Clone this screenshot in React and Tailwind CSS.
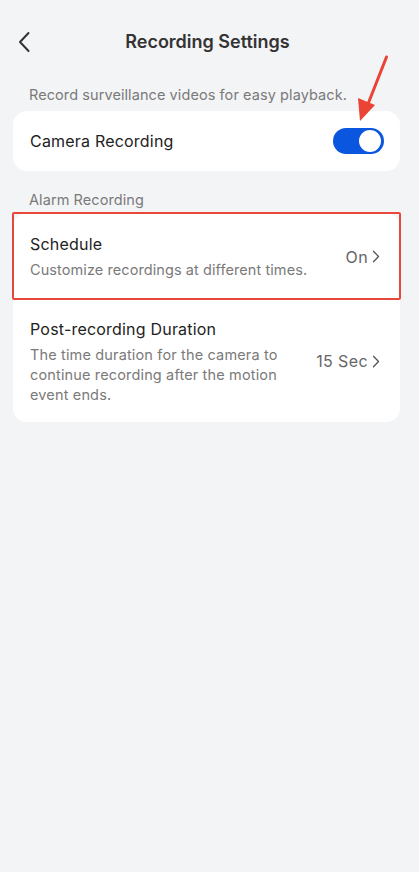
import React from "react";

const Chevron = () => (
  <svg width="8" height="13" viewBox="0 0 8 13" fill="none" className="ml-[4px]">
    <path d="M1.5 1.2 L6.5 6.5 L1.5 11.8" stroke="#555" strokeWidth="1.3" strokeLinecap="round" strokeLinejoin="round" />
  </svg>
);

export default function App() {
  return (
    <div
      className="w-[419px] h-[872px] bg-[#f3f4f6] text-[#222] relative overflow-hidden"
      style={{ fontFamily: "Inter, 'Noto Sans', sans-serif" }}
    >
      {/* Header */}
      <div className="h-[84px] flex items-center justify-center relative">
        <div className="absolute left-[17px] top-[31px]">
          <svg width="14" height="22" viewBox="0 0 14 22" fill="none">
            <path d="M11.5 2 L3 11 L11.5 20" stroke="#333" strokeWidth="2" strokeLinecap="round" strokeLinejoin="round" />
          </svg>
        </div>
        <h1 className="text-[18px] font-semibold text-[#333] tracking-[0px] -mt-[1px] -ml-[4px]">Recording Settings</h1>
      </div>

      <p className="px-[29px] text-[14.5px] tracking-[0.08px] text-[#7a7a7a] leading-[20px] mt-[1px]">Record surveillance videos for easy playback.</p>

      <div className="ml-[13px] w-[387px] mt-[6px] bg-white rounded-[14px] h-[60px] flex items-center justify-between pl-[17px] pr-[16px]">
        <span className="text-[16px] tracking-[0.2px] text-[#222]">Camera Recording</span>
        <div className="w-[51px] h-[26px] rounded-full bg-[#0a56de] flex items-center justify-end pr-[3px]">
          <div className="w-[22px] h-[22px] rounded-full bg-white" />
        </div>
      </div>

      <p className="px-[29px] text-[14.5px] tracking-[0.08px] text-[#7a7a7a] leading-[20px] mt-[19px]">Alarm Recording</p>

      <div className="ml-[13px] w-[387px] mt-[3px] bg-white rounded-[14px] overflow-visible">
        <div className="h-[87px] flex items-center justify-between pl-[17px] pr-[20px] relative">
          <div className="flex flex-col">
            <span className="text-[16px] tracking-[0.2px] leading-[22px] text-[#222]">Schedule</span>
            <span className="text-[14.5px] tracking-[0.08px] leading-[20px] text-[#7a7a7a] mt-[5px]">Customize recordings at different times.</span>
          </div>
          <div className="flex items-center text-[16px] tracking-[0.4px] text-[#666]">
            On
            <Chevron />
          </div>
          <div className="absolute -left-[1px] -right-[1px] -top-[1px] bottom-0 border-[2.5px] border-[#e8473b] rounded-[2px] pointer-events-none" />
        </div>
        <div className="h-[122px] flex items-center justify-between pl-[17px] pr-[20px]">
          <div className="flex flex-col w-[262px]">
            <span className="text-[16px] tracking-[0.2px] leading-[22px] text-[#222]">Post-recording Duration</span>
            <span className="text-[14.5px] tracking-[0.15px] leading-[20px] text-[#7a7a7a] mt-[5px]">
              The time duration for the camera to continue recording after the motion event ends.
            </span>
          </div>
          <div className="flex items-center text-[16px] tracking-[0.4px] text-[#666]">
            15 Sec
            <Chevron />
          </div>
        </div>
      </div>

      {/* Red annotation arrow */}
      <svg className="absolute left-[352px] top-[54px]" width="40" height="70" viewBox="0 0 40 70" fill="none">
        <path d="M34.5 3 L16 50" stroke="#eb4335" strokeWidth="3" strokeLinecap="round" />
        <path d="M6 44 L23 51 L8 67 Z" fill="#eb4335" />
      </svg>
    </div>
  );
}
